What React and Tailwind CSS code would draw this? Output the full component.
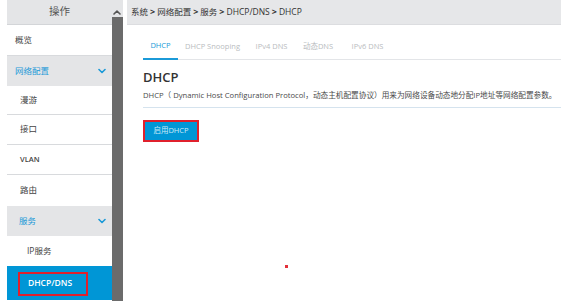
import React from 'react';

const font = { fontFamily: '"Open Sans", "Noto Sans CJK SC", sans-serif' };

const Chevron = ({ up = false, className = '' }) => (
    <svg className={className} width="8" height="6" viewBox="0 0 8 6" fill="none">
        <path
            d={up ? 'M1 5 L4 2 L7 5' : 'M1 1.5 L4 4.5 L7 1.5'}
            stroke="currentColor"
            strokeWidth="1.6"
            strokeLinecap="round"
            strokeLinejoin="round"
        />
    </svg>
);

const menu = [
    { label: '概览', h: 'h-[31px]', pl: 'pl-[8px]', line: true },
    { label: '网络配置', h: 'h-[30px]', pl: 'pl-[8px]', group: true },
    { label: '漫游', h: 'h-[29px]', pl: 'pl-[13px]', line: true },
    { label: '接口', h: 'h-[30px]', pl: 'pl-[13px]', line: true },
    { label: 'VLAN', h: 'h-[30px]', pl: 'pl-[13px]', line: true },
    { label: '路由', h: 'h-[31px]', pl: 'pl-[13px]' },
    { label: '服务', h: 'h-[30px]', pl: 'pl-[12px]', group: true },
    { label: 'IP服务', h: 'h-[30px]', pl: 'pl-[20px]' },
    { label: 'DHCP/DNS', h: 'h-[34px]', pl: 'pl-[20px]', active: true },
];

const tabs = [
    { label: 'DHCP', w: 'w-[35px]' },
    { label: 'DHCP Snooping', w: 'w-[69px]' },
    { label: 'IPv4 DNS', w: 'w-[49px]' },
    { label: '动态DNS', w: 'w-[44px]' },
    { label: 'IPv6 DNS', w: 'w-[55px]' },
];

export default function App() {
    return (
        <div className="relative flex w-[581px] h-[301px] overflow-hidden bg-white" style={font}>
            {/* Sidebar */}
            <aside className="relative ml-[7px] w-[116px] flex-shrink-0 flex flex-col">
                <div className="h-[25px] flex items-center bg-[#e4e5e7] border-b border-[#d3d5d8]">
                    <span className="w-[105px] text-center text-[10.5px] text-[#555]">操作</span>
                    <Chevron up className="text-[#555] ml-[1px]" />
                </div>
                <div className="w-[105px] flex flex-col">
                    {menu.map((item) => (
                        <div
                            key={item.label}
                            className={`${item.h} ${item.pl} flex items-center justify-between pr-[6px] text-[8.5px] ${
                                item.group
                                    ? 'bg-[#e4e5e7] text-[#1b9ad8]'
                                    : item.active
                                    ? 'bg-[#0096d6] text-white'
                                    : 'bg-white text-[#444]'
                            } ${item.line ? 'border-b border-[#d8dadd]' : ''}`}
                        >
                            {item.active ? (
                                <span className="-ml-[9px] mt-[1px] w-[70px] h-[24px] border-2 border-[#e0202c] flex items-center pl-[8px] font-semibold">
                                    {item.label}
                                </span>
                            ) : (
                                <span className={item.label === 'VLAN' ? 'font-semibold text-[7.5px]' : ''}>{item.label}</span>
                            )}
                            {item.group && <Chevron className="text-[#1b9ad8]" />}
                        </div>
                    ))}
                </div>
                {/* scrollbar */}
                <div className="absolute right-0 top-[17px] bottom-0 w-[11px] bg-[#6b6b6b]" />
            </aside>

            {/* Main */}
            <main className="ml-[4px] w-[434px] flex flex-col">
                <div className="h-[25px] bg-[#e6e7e9] border-b border-[#dcdde0] flex items-center pl-[4px] text-[8.5px] text-[#333]">
                    系统<b className="mx-[2px] text-[9px]">&gt;</b>网络配置<b className="mx-[2px] text-[9px]">&gt;</b>服务<b className="mx-[2px] text-[9px]">&gt;</b>DHCP/DNS<b className="mx-[2px] text-[9px]">&gt;</b>DHCP
                </div>

                <div className="pl-[16px] flex flex-col">
                    <div className="mt-[9px] h-[26px] flex border-b border-[#e3e5e8]">
                        {tabs.map((t, i) => (
                            <div
                                key={t.label}
                                className={`${t.w} flex items-center justify-center whitespace-nowrap text-[7.5px] ${
                                    i === 0
                                        ? 'text-[#1b9ad8] border-b-2 border-[#1b9ad8] -mb-[1px]'
                                        : 'text-[#b9bcc0]'
                                }`}
                            >
                                {t.label}
                            </div>
                        ))}
                    </div>

                    <h1 className="mt-[9px] text-[13px] leading-[16px] font-semibold text-[#333]">DHCP</h1>
                    <p className="mt-[4px] pb-[6px] text-[7.65px] leading-[12px] text-[#4a4a4a] whitespace-nowrap border-b border-[#d5e3ee]">
                        DHCP（ Dynamic Host Configuration Protocol，动态主机配置协议）用来为网络设备动态地分配IP地址等网络配置参数。
                    </p>

                    <div className="mt-[12px]">
                        <button className="w-[56px] h-[22px] border-2 border-[#e0202c] bg-[#0096d6] text-[7.5px] text-[#cfe9f7] flex items-center justify-center">
                            启用DHCP
                        </button>
                    </div>
                </div>
            </main>

            {/* stray marker */}
            <div className="absolute left-[285px] top-[265px] w-[3px] h-[3px] bg-[#e3303a]" />
        </div>
    );
}
